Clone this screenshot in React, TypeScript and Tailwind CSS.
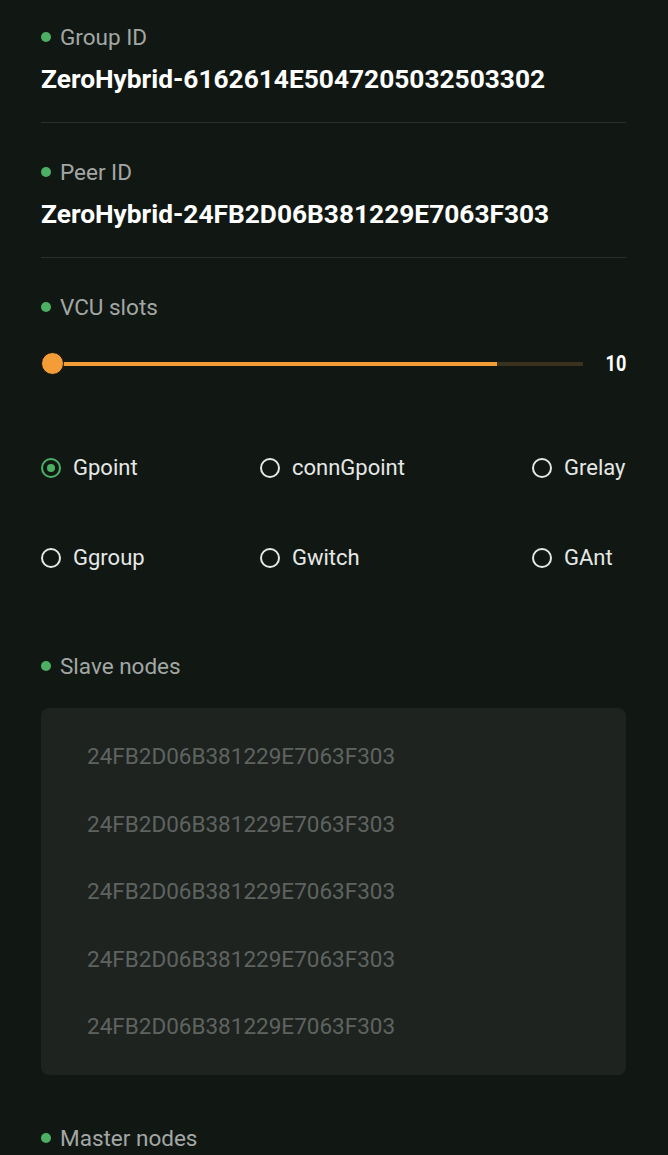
const font = { fontFamily: "Roboto, 'Noto Sans', sans-serif" };

const options = ["Gpoint", "connGpoint", "Grelay", "Ggroup", "Gwitch", "GAnt"];
const slaves = Array.from({ length: 5 }, () => "24FB2D06B381229E7063F303");

function Label({ text, className = "" }: { text: string; className?: string }) {
  return (
    <div className={`flex h-[30px] items-center gap-[9px] ${className}`}>
      <span className="h-[10px] w-[10px] rounded-full bg-[#4caf64]" />
      <span className="text-[22.5px] leading-[30px] text-[#a3a7a4]">{text}</span>
    </div>
  );
}

function Radio({ label, checked }: { label: string; checked?: boolean }) {
  return (
    <div className="flex h-[30px] items-center gap-[12px]">
      <span
        className={`flex h-[20px] w-[20px] items-center justify-center rounded-full border-2 ${
          checked ? "border-[#4caf64]" : "border-[#e6e8e6]"
        }`}
      >
        {checked ? <span className="h-[8px] w-[8px] rounded-full bg-[#4caf64]" /> : null}
      </span>
      <span className="text-[22px] leading-[30px] text-[#e6e8e6]">{label}</span>
    </div>
  );
}

export default function App() {
  return (
    <div className="min-h-[1155px] bg-[#111814] pt-[22px] pr-[42px] pb-10 pl-[41px]" style={font}>
      <Label text="Group ID" />
      <div className="mt-[12px] text-[26.3px] font-bold leading-[30px] text-white">
        ZeroHybrid-6162614E5047205032503302
      </div>
      <div className="mt-[28px] h-px bg-[#2a2f2c]" />

      <Label text="Peer ID" className="mt-[34px]" />
      <div className="mt-[12px] text-[26.3px] font-bold leading-[30px] text-white">
        ZeroHybrid-24FB2D06B381229E7063F303
      </div>
      <div className="mt-[28px] h-px bg-[#2a2f2c]" />

      <Label text="VCU slots" className="mt-[34px]" />
      <div className="mt-[29px] flex h-6 items-center">
        <div className="relative h-6 w-[542px]">
          <div className="absolute top-[11px] left-[11px] h-[4px] w-[531px] bg-[#3b311f]" />
          <div className="absolute top-[11px] left-[11px] h-[4px] w-[445px] bg-[#f39c38]" />
          <div className="absolute top-px left-0 h-[23px] w-[23px] rounded-full border border-[#0a0c0a] bg-[#f39c38]" />
        </div>
        <span className="ml-auto origin-right scale-x-[0.82] text-[22px] font-bold text-white">10</span>
      </div>

      <div className="mt-[78px] grid grid-cols-[219px_272px_1fr] gap-y-[60px]">
        {options.map((o, i) => (
          <Radio key={o} label={o} checked={i === 0} />
        ))}
      </div>

      <Label text="Slave nodes" className="mt-[78px]" />
      <div className="mt-[27px] flex h-[367px] flex-col gap-[37.5px] rounded-lg bg-[#1e2320] pt-[33px] pl-[46px]">
        {slaves.map((s, i) => (
          <div key={i} className="text-[22.5px] leading-[30px] text-[#5e6360]">
            {s}
          </div>
        ))}
      </div>

      <Label text="Master nodes" className="mt-[48px]" />
    </div>
  );
}
